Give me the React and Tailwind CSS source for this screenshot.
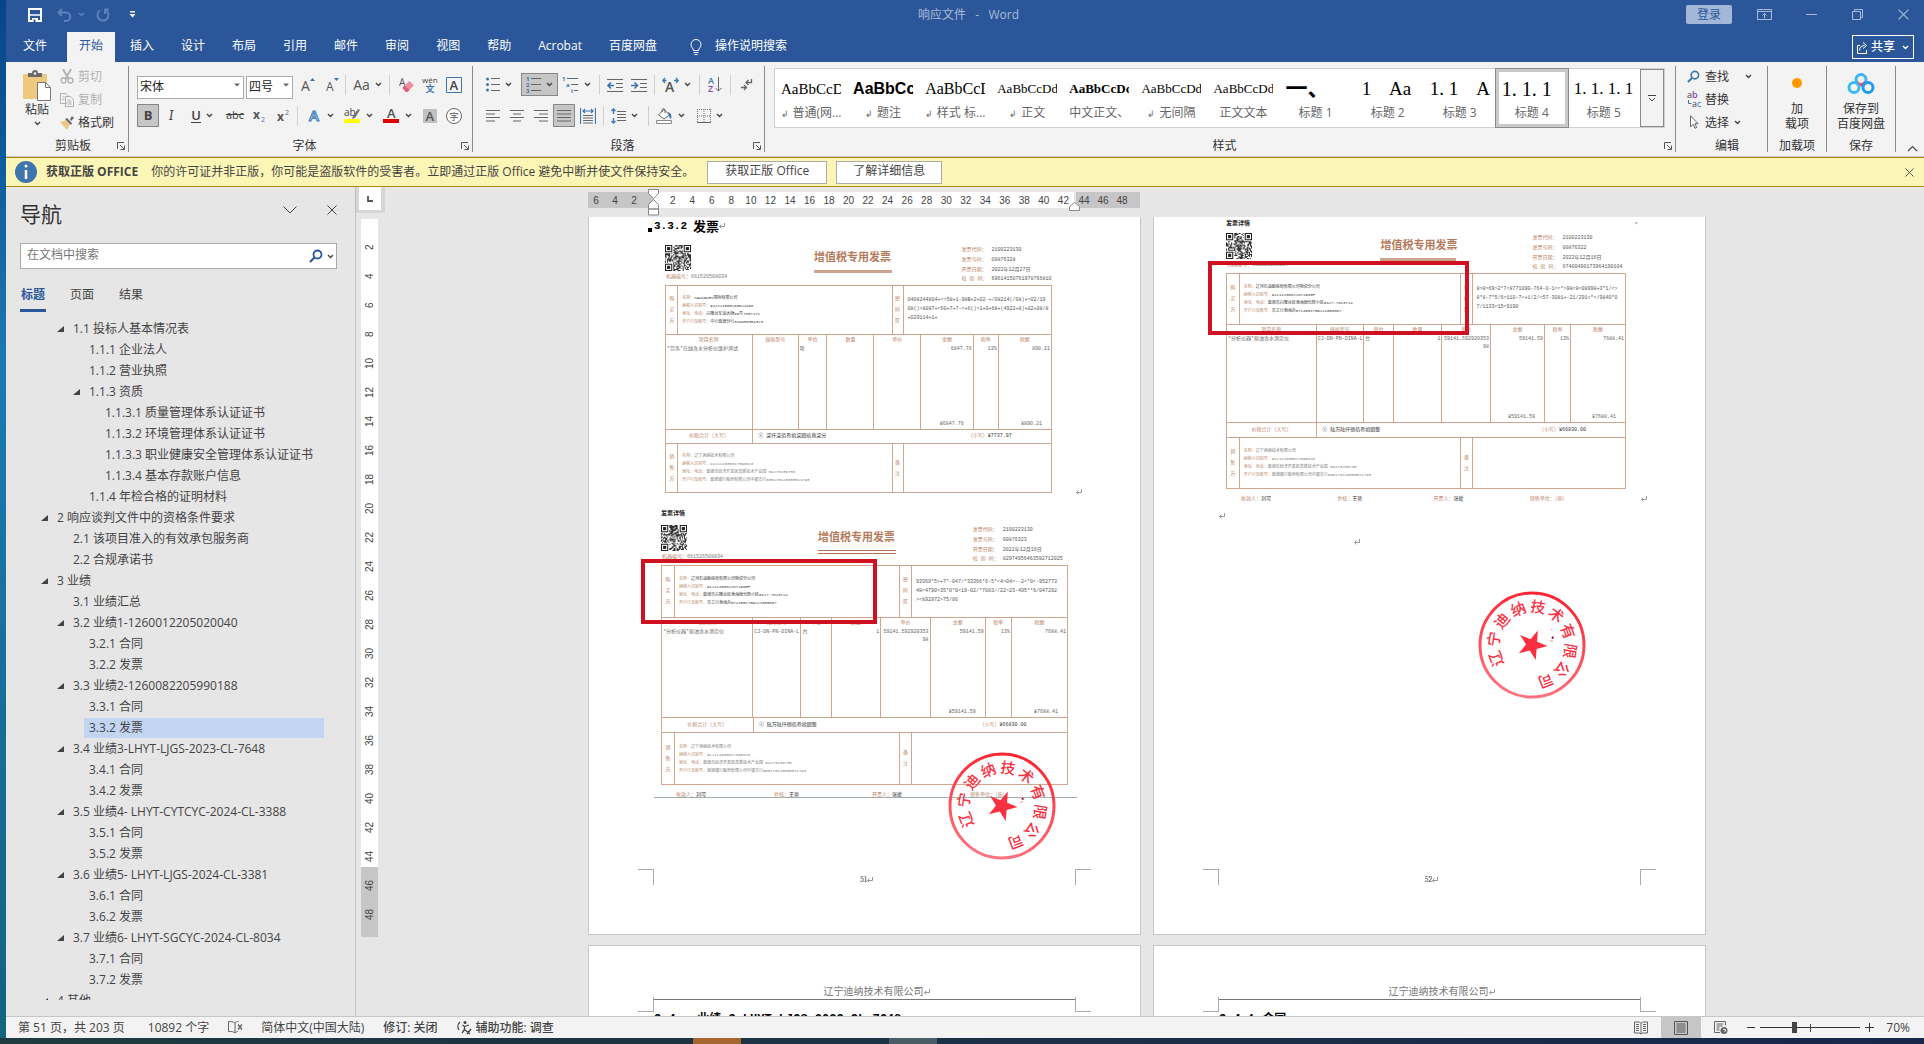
import { useState } from "react";

const tabs = ["插入", "设计", "布局", "引用", "邮件", "审阅", "视图", "帮助", "Acrobat", "百度网盘"];

const headings = [
  { level: 2, text: "1.1 投标人基本情况表", open: true },
  { level: 3, text: "1.1.1 企业法人" },
  { level: 3, text: "1.1.2 营业执照" },
  { level: 3, text: "1.1.3 资质", open: true },
  { level: 4, text: "1.1.3.1 质量管理体系认证证书" },
  { level: 4, text: "1.1.3.2 环境管理体系认证证书" },
  { level: 4, text: "1.1.3.3 职业健康安全管理体系认证证书" },
  { level: 4, text: "1.1.3.4 基本存款账户信息" },
  { level: 3, text: "1.1.4 年检合格的证明材料" },
  { level: 1, text: "2 响应谈判文件中的资格条件要求", open: true },
  { level: 2, text: "2.1 该项目准入的有效承包服务商" },
  { level: 2, text: "2.2 合规承诺书" },
  { level: 1, text: "3 业绩", open: true },
  { level: 2, text: "3.1 业绩汇总" },
  { level: 2, text: "3.2 业绩1-1260012205020040", open: true },
  { level: 3, text: "3.2.1 合同" },
  { level: 3, text: "3.2.2 发票" },
  { level: 2, text: "3.3 业绩2-1260082205990188", open: true },
  { level: 3, text: "3.3.1 合同" },
  { level: 3, text: "3.3.2 发票" },
  { level: 2, text: "3.4 业绩3-LHYT-LJGS-2023-CL-7648", open: true },
  { level: 3, text: "3.4.1 合同" },
  { level: 3, text: "3.4.2 发票" },
  { level: 2, text: "3.5 业绩4- LHYT-CYTCYC-2024-CL-3388", open: true },
  { level: 3, text: "3.5.1 合同" },
  { level: 3, text: "3.5.2 发票" },
  { level: 2, text: "3.6 业绩5- LHYT-LJGS-2024-CL-3381", open: true },
  { level: 3, text: "3.6.1 合同" },
  { level: 3, text: "3.6.2 发票" },
  { level: 2, text: "3.7 业绩6- LHYT-SGCYC-2024-CL-8034", open: true },
  { level: 3, text: "3.7.1 合同" },
  { level: 3, text: "3.7.2 发票" },
  { level: 1, text: "4 其他", open: true },
];

const indents = { 1: "pl-[21px]", 2: "pl-[37px]", 3: "pl-[53px]", 4: "pl-[69px]" };

const song = "font-['Liberation_Serif','Noto_Sans_CJK_SC',serif]";

const styleItems = [
  { sample: "AaBbCcDdE", label: "普通(网...", mark: true, look: `${song} text-[15px]` },
  { sample: "AaBbCcDd", label: "题注", mark: true, look: "font-['Liberation_Sans',sans-serif] text-base font-bold" },
  { sample: "AaBbCcDd", label: "样式 标...", mark: true, look: `${song} text-base` },
  { sample: "AaBbCcDdEe", label: "正文", mark: true, look: `${song} text-[13px]` },
  { sample: "AaBbCcDdEe", label: "中文正文、", look: `${song} text-[13px] font-bold` },
  { sample: "AaBbCcDdEe", label: "无间隔", mark: true, look: `${song} text-[13px]` },
  { sample: "AaBbCcDdEe", label: "正文文本", look: `${song} text-[13px]` },
  { sample: "一、", label: "标题 1", look: `${song} text-[22px] font-bold` },
  { sample: "1    Aa", label: "标题 2", look: `${song} text-[19px] font-medium pl-1` },
  { sample: "1. 1    A", label: "标题 3", look: `${song} text-[19px] font-medium` },
  { sample: "1. 1. 1", label: "标题 4", look: `${song} text-xl font-medium`, active: true },
  { sample: "1. 1. 1. 1", label: "标题 5", look: `${song} text-[17px] font-medium` },
];

/* ---------- small drawings ---------- */

function Svg({ w, h, children, className = "" }) {
  return (
    <svg width={w} height={h} viewBox={`0 0 ${w} ${h}`} fill="none" className={`shrink-0 ${className}`} aria-hidden="true">
      {children}
    </svg>
  );
}

function Chevron({ className = "text-[#444]" }) {
  return (
    <Svg w={7} h={5} className={className}>
      <path d="M1 1l2.5 2.5L6 1" stroke="currentColor" strokeWidth="1.4" />
    </Svg>
  );
}

function Letter({ x, y, size = 12, fill = "#555", children, ...rest }) {
  return (
    <text x={x} y={y} fontSize={size} fill={fill} fontFamily="Open Sans, Noto Sans CJK SC, sans-serif" {...rest}>
      {children}
    </text>
  );
}

function Lines({ rows, color = "#666" }) {
  return rows.map(([x1, x2, y]) => <path key={y} d={`M${x1} ${y}H${x2}`} stroke={color} />);
}

function Launcher() {
  return (
    <Svg w={8} h={8}>
      <path d="M.5 7V.5H7M3 3l4 4M7.5 3.5v4h-4" stroke="#555" />
    </Svg>
  );
}

function Magnifier({ color = "#2b579a", size = 14 }) {
  return (
    <svg width={size} height={size} viewBox="0 0 14 14" fill="none" aria-hidden="true">
      <circle cx="8.5" cy="5.5" r="4" stroke={color} strokeWidth="1.8" />
      <path d="M5.5 8.5L1 13" stroke={color} strokeWidth="2.2" />
    </svg>
  );
}

function CloseMark({ size = 10, color = "#444" }) {
  return (
    <svg width={size} height={size} viewBox="0 0 10 10" fill="none" aria-hidden="true">
      <path d="M.5.5l9 9M9.5.5l-9 9" stroke={color} />
    </svg>
  );
}

/* ---------- title bar and tabs ---------- */

function TitleBar() {
  return (
    <header className="flex h-8 shrink-0 items-center bg-[#2b579a] pr-[15px] pb-[3px] pl-[22px]">
      <div className="flex flex-1 items-center">
        <button aria-label="保存">
          <Svg w={14} h={14}>
            <path d="M1 1h12v12H1z" stroke="#fff" strokeWidth="2" />
            <path d="M1 7h12" stroke="#fff" strokeWidth="1.5" />
            <path d="M4 10h6v4H4z" fill="#fff" />
            <path d="M5.5 11.5h2V14h-2z" fill="#2b579a" />
          </Svg>
        </button>
        <button aria-label="撤消" className="ml-[15px] flex items-center gap-1.5">
          <Svg w={15} h={14}>
            <path d="M5 1L1.500 4.500 5 8M2 4.500h7a4.200 4.200 0 0 1 0 8.500H7" stroke="#5c82bb" strokeWidth="2" />
          </Svg>
          <Chevron className="text-[#5c82bb]" />
        </button>
        <button aria-label="重复" className="ml-[11px]">
          <Svg w={14} h={14}>
            <path d="M4 2.500a5.500 5.500 0 1 0 6 0M13 1.500H9v4.500" stroke="#5c82bb" strokeWidth="2" />
          </Svg>
        </button>
        <button aria-label="自定义快速访问工具栏" className="ml-[19px]">
          <Svg w={7} h={7}>
            <path d="M1 .8h5" stroke="#fff" strokeWidth="1.400" />
            <path d="M.5 3h6l-3 3.500z" fill="#fff" />
          </Svg>
        </button>
      </div>
      <h1 className="text-xs text-[#a9bbd8]">响应文件&nbsp;&nbsp; -&nbsp;&nbsp; Word</h1>
      <div className="flex flex-1 items-center justify-end">
        <button className="mr-[25px] h-[19px] w-[46px] rounded-xs bg-[#a3b8d9] text-xs leading-[18px] text-[#2b579a]">登录</button>
        <button aria-label="功能区显示选项" className="mr-[34px]">
          <Svg w={15} h={11}>
            <path d="M.5.5h14v10H.5zM.5 2.500h14M7.500 9.500V4.500M5.500 6.500l2-2 2 2" stroke="#a9bbd8" />
          </Svg>
        </button>
        <button aria-label="最小化" className="mr-[35px]">
          <Svg w={11} h={11}><path d="M0 5.500h11" stroke="#a9bbd8" /></Svg>
        </button>
        <button aria-label="还原" className="mr-[35px]">
          <Svg w={11} h={11}><path d="M.5 2.500h8v8h-8zM2.500 2.500v-2h8v8h-2" stroke="#a9bbd8" /></Svg>
        </button>
        <button aria-label="关闭"><CloseMark size={11} color="#a9bbd8" /></button>
      </div>
    </header>
  );
}

function TabRow() {
  return (
    <nav className="flex h-[30px] shrink-0 items-stretch bg-[#2b579a] pr-2.5 pl-[5px] text-xs text-white">
      <button className="mr-[8px] px-3 pb-0.5">文件</button>
      <button className="mr-[3px] bg-[#f3f3f3] px-3 pb-0.5 text-[#2b579a]">开始</button>
      {tabs.map((tab) => (
        <button key={tab} className="mr-[3px] px-3 pb-0.5">{tab}</button>
      ))}
      <button className="ml-[18px] flex items-center gap-[13px] pb-0.5">
        <Svg w={12} h={17} className="mt-0.5">
          <path d="M3.500 11.500c0-2-2.500-3-2.500-6a5 5 0 0 1 10 0c0 3-2.500 4-2.500 6zM3.500 13.500h5M4.500 15.500h3" stroke="#fff" />
        </Svg>
        操作说明搜索
      </button>
      <button className="mt-[3px] mb-[3px] ml-auto flex items-center gap-[3px] border border-white px-1 font-medium">
        <Svg w={11} h={13}>
          <path d="M3 4.500H.5v8h9V9M2.500 9.500c0-3 2-5 5-5M6 1.500l3.500 3L6 7.500" stroke="#fff" />
        </Svg>
        共享
        <Chevron className="ml-1 text-white" />
      </button>
    </nav>
  );
}

/* ---------- ribbon ---------- */

function Tool({ label, className = "w-6", active, drop, children }) {
  return (
    <button
      aria-label={label}
      className={`flex h-[23px] shrink-0 items-center justify-center ${active ? "border border-[#888] bg-[#c6c6c6]" : ""} ${className}`}
    >
      {children}
      {drop && <span className="ml-[5px]"><Chevron /></span>}
    </button>
  );
}

function Divider() {
  return <span className="h-5 w-px shrink-0 bg-[#d0d0d0]" />;
}

function Group({ name, launcher, className = "", children }) {
  return (
    <section className={`my-1 flex shrink-0 flex-col border-r border-[#8a8a8a] ${className}`}>
      <div className="flex-1">{children}</div>
      <div className="relative h-[17px] text-center text-xs leading-[21px] text-[#333]">
        {name}
        {launcher && (
          <button aria-label={`${name}设置`} className="absolute right-[3px] bottom-[2px]"><Launcher /></button>
        )}
      </div>
    </section>
  );
}

function Combo({ label, value, options, className }) {
  return (
    <label className={`relative block h-[23px] ${className}`}>
      <span className="sr-only">{label}</span>
      <select defaultValue={value} className="h-full w-full appearance-none border border-[#ababab] bg-white pl-[2px] text-xs leading-5 text-[#222]">
        {options.map((option) => <option key={option}>{option}</option>)}
      </select>
      <Svg w={6} h={4} className="pointer-events-none absolute top-[10px] right-1"><path d="M0 .5h6l-3 3z" fill="#666" /></Svg>
    </label>
  );
}

function ClipboardGroup() {
  return (
    <Group name="剪贴板" launcher className="w-[123px] pl-3">
      <div className="flex">
        <button className="flex w-[38px] flex-col items-center pt-1 text-xs leading-[17px] text-[#333]">
          <Svg w={30} h={31}>
            <path d="M1 4h24v25H1z" fill="#edc87e" />
            <path d="M6 3h4a3 3 0 0 1 6 0h4v4H6z" fill="#6a6a6a" />
            <circle cx="13" cy="3.500" r="1.300" fill="#f3f3f3" />
            <path d="M15.500 12.500h8l5 5v13h-13z" fill="#fff" stroke="#777" />
            <path d="M23.500 12.500v5h5" stroke="#777" />
          </Svg>
          粘贴
          <span className="mt-[3px]"><Chevron /></span>
        </button>
        <div className="-mt-px ml-1 flex flex-col text-xs leading-[23px]">
          <button className="flex h-[23px] items-center gap-1 text-[#b1b1b1]">
            <Svg w={14} h={15}>
              <path d="M3 0l5.500 10M11 0L5.500 10" stroke="#b1b1b1" strokeWidth="2" />
              <circle cx="3.500" cy="11.500" r="2.500" stroke="#b1b1b1" strokeWidth="1.300" />
              <circle cx="10.500" cy="11.500" r="2.500" stroke="#b1b1b1" strokeWidth="1.300" />
            </Svg>
            剪切
          </button>
          <button className="flex h-[23px] items-center gap-1 text-[#b1b1b1]">
            <Svg w={14} h={14}>
              <path d="M7 10.500H.5V.5H6L8.500 3M2.500 4h2M2.500 6.500h2" stroke="#b1b1b1" />
              <path d="M5.500 3.500h5l3 3v7h-8zM7.500 7h3M7.500 9h4M7.500 11h4" stroke="#b1b1b1" />
            </Svg>
            复制
          </button>
          <button className="flex h-[23px] items-center gap-1 text-[#333]">
            <Svg w={14} h={14}>
              <path d="M0 6l6-2 4 4-3 6z" fill="#edc48a" />
              <path d="M5 3l2-1 5 5-1 2zM10 3l2-3 2 2-3 3z" fill="#6a6a6a" />
            </Svg>
            格式刷
          </button>
        </div>
      </div>
    </Group>
  );
}

function FontGroup() {
  return (
    <Group name="字体" launcher className="w-[344px] pl-2">
      <div className="flex items-center pt-[7px]">
        <Combo label="字体" value="宋体" options={["宋体", "黑体"]} className="mr-[2px] w-[107px]" />
        <Combo label="字号" value="四号" options={["四号", "小四"]} className="mr-[2px] w-[47px]" />
        <Tool label="增大字号" className="w-[25px]">
          <Svg w={14} h={15}><Letter x={0} y={14} size={14}>A</Letter><path d="M9 4h5l-2.500-3z" fill="#3e75ad" /></Svg>
        </Tool>
        <Tool label="减小字号" className="w-[25px]">
          <Svg w={13} h={15}><Letter x={0} y={14} size={12}>A</Letter><path d="M8 1h5l-2.500 3z" fill="#3e75ad" /></Svg>
        </Tool>
        <Divider />
        <Tool label="更改大小写" drop className="w-[43px] text-sm text-[#555]">Aa</Tool>
        <Divider />
        <Tool label="清除所有格式" className="ml-1 w-6">
          <Svg w={15} h={16}>
            <Letter x={0} y={9} size={10}>A</Letter>
            <path d="M3.500 11L10 4l5 4-6.500 7H7z" fill="#ec8ea0" />
            <path d="M3.500 11l2-2.200L10.500 13l-2 2H7z" fill="#d9607c" />
          </Svg>
        </Tool>
        <Tool label="拼音指南" className="w-6">
          <Svg w={16} h={17}>
            <Letter x={0} y={7} size={8} fill="#444">wén</Letter>
            <Letter x={3.500} y={16} size={9} fill="#3e75ad" fontWeight="bold">文</Letter>
          </Svg>
        </Tool>
        <Tool label="字符边框" className="w-6">
          <Svg w={16} h={16}><path d="M.5.5h15v15H.5z" stroke="#3e75ad" /><Letter x={3.500} y={13} size={13} fill="#444" fontWeight="600">A</Letter></Svg>
        </Tool>
      </div>
      <div className="flex items-center pt-2 text-[13px] text-[#444]">
        <Tool label="加粗" active className="w-[22px] font-bold">B</Tool>
        <Tool label="倾斜" className="ml-px w-[22px] font-serif text-sm italic">I</Tool>
        <Tool label="下划线" drop className="ml-[3px] w-[34px] font-semibold"><span className="border-b border-[#444] leading-[14px]">U</span></Tool>
        <Tool label="删除线" className="ml-[4px] w-6 text-[11px] line-through">abc</Tool>
        <Tool label="下标" className="ml-[2px] w-[22px]">
          <Svg w={14} h={13}><Letter x={0} y={10} size={12} fontWeight="bold">x</Letter><Letter x={8} y={13} size={7} fill="#3e75ad">2</Letter></Svg>
        </Tool>
        <Tool label="上标" className="mr-[2px] ml-[2px] w-[22px]">
          <Svg w={14} h={13}><Letter x={0} y={12} size={12} fontWeight="bold">x</Letter><Letter x={8} y={6} size={7} fill="#3e75ad">2</Letter></Svg>
        </Tool>
        <Divider />
        <Tool label="文本效果" drop className="ml-[5px] w-[34px]">
          <Svg w={15} h={15}><Letter x={2} y={13} size={15} fill="#fff" stroke="#4a86c4" strokeWidth="1.200" fontWeight="600">A</Letter></Svg>
        </Tool>
        <Tool label="突出显示" drop className="ml-[4px] w-[34px]">
          <Svg w={17} h={17}>
            <Letter x={0} y={9} size={10} fill="#444">ab</Letter>
            <path d="M14 2l2 1-5 8-3 1 1-3z" fill="#777" />
            <path d="M0 12h16v4H0z" fill="#ff0" />
          </Svg>
        </Tool>
        <Tool label="字体颜色" drop className="ml-[5px] w-[34px]">
          <Svg w={17} h={17}><Letter x={4} y={11} size={13} fontWeight="600">A</Letter><path d="M0 12h16v4H0z" fill="#e00000" /></Svg>
        </Tool>
        <Tool label="字符底纹" className="ml-[4px] w-6">
          <Svg w={14} h={14}><path d="M0 0h14v14H0z" fill="#c0c0c0" /><Letter x={2.500} y={12} size={13} fontWeight="600">A</Letter></Svg>
        </Tool>
        <Tool label="带圈字符" className="w-6">
          <Svg w={16} h={16}><circle cx="8" cy="8" r="7.500" stroke="#666" fill="#fff" /><Letter x={3.500} y={11.500} size={9}>字</Letter></Svg>
        </Tool>
      </div>
    </Group>
  );
}

function ParagraphGroup() {
  return (
    <Group name="段落" launcher className="w-[292px] pl-2">
      <div className="flex items-center pt-[7px]">
        <Tool label="项目符号" drop className="w-9">
          <Svg w={14} h={15}>
            <circle cx="1.500" cy="2" r="1.500" fill="#3e75ad" /><circle cx="1.500" cy="7.500" r="1.500" fill="#3e75ad" /><circle cx="1.500" cy="13" r="1.500" fill="#3e75ad" />
            <Lines rows={[[5, 14, 1.5], [5, 14, 7.5], [5, 14, 13.5]]} />
          </Svg>
        </Tool>
        <Tool label="编号" drop active className="ml-1 w-[37px]">
          <Svg w={15} h={17}>
            <Letter x={0} y={5} size={6} fill="#3e75ad" fontWeight="bold">1</Letter>
            <Letter x={0} y={11} size={6} fill="#3e75ad" fontWeight="bold">2</Letter>
            <Letter x={0} y={17} size={6} fill="#3e75ad" fontWeight="bold">3</Letter>
            <Lines rows={[[5, 15, 2.5], [5, 15, 8.5], [5, 15, 14.5]]} />
          </Svg>
        </Tool>
        <Tool label="多级列表" drop className="mr-[7px] ml-[2px] w-8">
          <Svg w={17} h={17}>
            <Letter x={0} y={5} size={6} fill="#3e75ad" fontWeight="bold">1</Letter>
            <Letter x={4} y={11} size={6} fill="#3e75ad" fontWeight="bold">a</Letter>
            <Letter x={9} y={17} size={6} fill="#3e75ad" fontWeight="bold">i</Letter>
            <Lines rows={[[5, 16, 2.5], [9, 16, 8.5], [12, 16, 14.5]]} />
          </Svg>
        </Tool>
        <Divider />
        <Tool label="减少缩进量" className="ml-[3px] w-6">
          <Svg w={16} h={14}>
            <Lines rows={[[0, 16, 1.5], [9, 16, 5.5], [9, 16, 9.5], [0, 16, 13.5]]} />
            <path d="M7 7.500H1M4 4.500l-3 3 3 3" stroke="#3e75ad" strokeWidth="1.600" />
          </Svg>
        </Tool>
        <Tool label="增加缩进量" className="mr-[3px] w-6">
          <Svg w={16} h={14}>
            <Lines rows={[[0, 16, 1.5], [9, 16, 5.5], [9, 16, 9.5], [0, 16, 13.5]]} />
            <path d="M0 7.500h6M3.500 4.500l3 3-3 3" stroke="#3e75ad" strokeWidth="1.600" />
          </Svg>
        </Tool>
        <Divider />
        <Tool label="中文版式" drop className="mr-[6px] ml-[4px] w-[34px]">
          <Svg w={17} h={15}>
            <Letter x={3} y={15} size={14} fontWeight="600">A</Letter>
            <path d="M4.500 3.500H1M3 1L.8 3.500 3 6M12 3.500h4M14 1l2.200 2.500L14 6" stroke="#3e75ad" strokeWidth="1.300" />
          </Svg>
        </Tool>
        <Divider />
        <Tool label="排序" className="mr-[3px] ml-[3px] w-6">
          <Svg w={14} h={17}>
            <Letter x={0} y={8} size={9} fill="#3e75ad" fontWeight="600">A</Letter>
            <Letter x={0} y={16} size={9} fill="#8e44ad" fontWeight="600">Z</Letter>
            <path d="M10.500 1v14M7.500 12l3 3 3-3" stroke="#666" />
          </Svg>
        </Tool>
        <Divider />
        <Tool label="显示编辑标记" className="ml-1 w-6">
          <Svg w={12} h={13}>
            <path d="M10.500 1v3.500h-5M7.500 2L5 4.500 7.500 7M0 9.500h5M3 7l2.500 2.500L3 12" stroke="#666" strokeWidth="1.300" />
          </Svg>
        </Tool>
      </div>
      <div className="flex items-center pt-2">
        <Tool label="左对齐"><Svg w={14} h={12}><Lines rows={[[0, 14, 0.5], [0, 9, 4], [0, 14, 7.5], [0, 9, 11]]} /></Svg></Tool>
        <Tool label="居中"><Svg w={14} h={12}><Lines rows={[[0, 14, 0.5], [3, 11, 4], [0, 14, 7.5], [3, 11, 11]]} /></Svg></Tool>
        <Tool label="右对齐"><Svg w={14} h={12}><Lines rows={[[0, 14, 0.5], [5, 14, 4], [0, 14, 7.5], [5, 14, 11]]} /></Svg></Tool>
        <Tool label="两端对齐" active className="w-[22px]"><Svg w={14} h={12}><Lines rows={[[0, 14, 0.5], [0, 14, 4], [0, 14, 7.5], [0, 14, 11]]} /></Svg></Tool>
        <Tool label="分散对齐" className="mr-[3px] ml-px w-6">
          <Svg w={16} h={16}>
            <path d="M.5 0v16M15.500 0v16M3 3h10M5 1L3 3l2 2M11 1l2 2-2 2" stroke="#3e75ad" strokeWidth="1.200" />
            <Lines rows={[[3, 13, 7.5], [3, 13, 10], [3, 13, 12.5], [3, 13, 15]]} />
          </Svg>
        </Tool>
        <Divider />
        <Tool label="行距" drop className="mr-[7px] ml-[3px] w-[34px]">
          <Svg w={15} h={16}>
            <Lines rows={[[6, 15, 3.5], [6, 15, 6.5], [6, 15, 9.5], [6, 15, 12.5]]} />
            <path d="M2.500 1v5M.5 3l2-2 2 2M2.500 10v5M.5 13l2 2 2-2" stroke="#3e75ad" strokeWidth="1.300" />
          </Svg>
        </Tool>
        <Divider />
        <Tool label="底纹" drop className="ml-[4px] w-[34px]">
          <Svg w={17} h={16}>
            <path d="M2.500 7L8 1.500l5.500 5.500L8 11z" fill="#fff" stroke="#666" />
            <path d="M6 4V1.500a2 2 0 0 1 3 0V5" stroke="#666" />
            <path d="M12 4c3 1 4 4 3 7-2-1-2-4-3-7z" fill="#3e75ad" />
            <path d="M.5 12.500h15v3H.5z" fill="#fff" stroke="#888" />
          </Svg>
        </Tool>
        <Tool label="边框" drop className="ml-[4px] w-[38px]">
          <Svg w={14} h={14}>
            <path d="M.5 0v14M7 0v14M13.500 0v14M0 .5h14M0 7h14" stroke="#777" strokeDasharray="1 1" />
            <path d="M0 13.500h14" stroke="#666" />
          </Svg>
        </Tool>
      </div>
    </Group>
  );
}

function StylesGroup() {
  return (
    <Group name="样式" launcher className="min-w-0 flex-1 pl-[9px]">
      <div className="mt-[2px] mr-[10px] flex h-[60px] justify-between border border-[#d0d0d0] bg-white">
        {styleItems.map((item) => (
          <button
            key={item.label}
            className={`flex w-[72px] flex-col items-center ${item.active ? "border-[3px] border-[#c9c9c9] outline outline-[#8a8a8a]" : "border-[3px] border-transparent"}`}
          >
            <span className={`mt-[3px] block h-7 w-[60px] overflow-hidden text-left leading-7 whitespace-pre text-black ${item.look}`}>
              {item.sample}
            </span>
            <span className="mt-px text-xs leading-[18px] whitespace-nowrap text-[#666]">
              {item.mark && <span className="mr-1 text-[9px]">↲</span>}
              {item.label}
            </span>
          </button>
        ))}
        <button aria-label="其他样式" className="flex w-6 items-center justify-center border border-[#8a8a8a] bg-[#f3f3f3]">
          <Svg w={8} h={7}><path d="M0 .5h8M1 3l3 3 3-3" stroke="#444" /></Svg>
        </button>
      </div>
    </Group>
  );
}

function EditGroups() {
  return (
    <>
      <Group name="编辑" className="w-[92px] pl-[11px]">
        <div className="-mt-px flex flex-col text-xs text-[#333]">
          <button className="flex h-[23px] items-center gap-[5px]"><Magnifier color="#3e75ad" size={13} />查找<span className="ml-[11px]"><Chevron /></span></button>
          <button className="flex h-[23px] items-center gap-[2px]">
            <Svg w={16} h={17}>
              <Letter x={0} y={7} size={9} fill="#444">a</Letter>
              <Letter x={5} y={7} size={9} fill="#8e44ad" fontWeight="600">b</Letter>
              <Letter x={5} y={16} size={9} fill="#444">a</Letter>
              <Letter x={10} y={16} size={9} fill="#3e75ad">c</Letter>
              <path d="M1.500 9v3.500h3" stroke="#3e75ad" />
            </Svg>
            替换
          </button>
          <button className="flex h-[23px] items-center gap-[5px]">
            <Svg w={13} h={15}><path d="M3.500.8v11l2.700-2.500 1.800 4 1.700-.8-1.800-3.800h3.300z" stroke="#666" fill="#fff" /></Svg>
            选择
            <Chevron />
          </button>
        </div>
      </Group>
      <Group name="加载项" className="w-[59px]">
        <button className="flex w-full flex-col items-center pt-[11px] text-xs leading-[15px] text-[#333]">
          <Svg w={12} h={12} className="mb-3"><circle cx="6" cy="6" r="5" fill="#ff9800" /></Svg>
          加
          <span>载项</span>
        </button>
      </Group>
      <Group name="保存" className="w-[69px]">
        <button className="flex w-full flex-col items-center pt-[7px] text-xs leading-[15px] text-[#333]">
          <Svg w={28} h={21} className="mb-[7px]">
            <circle cx="14" cy="6.500" r="5" stroke="#3fb4f5" strokeWidth="3" />
            <path d="M9.500 9a5 5 0 0 0 9 0" stroke="#f2496b" strokeWidth="3.500" />
            <circle cx="7" cy="14.500" r="5" stroke="#35bdf2" strokeWidth="3" />
            <circle cx="21" cy="14.500" r="5" stroke="#1e9bf0" strokeWidth="3" />
          </Svg>
          保存到
          <span>百度网盘</span>
        </button>
      </Group>
    </>
  );
}

function Ribbon() {
  return (
    <div className="flex h-[95px] shrink-0 border-b border-[#c8c8c8] bg-[#f3f3f3]">
      <ClipboardGroup />
      <FontGroup />
      <ParagraphGroup />
      <StylesGroup />
      <EditGroups />
      <button aria-label="折叠功能区" className="flex w-[28px] items-end justify-end pr-1.5 pb-1">
        <Svg w={11} h={7}><path d="M1 6l4.500-4.500L10 6" stroke="#444" strokeWidth="1.200" /></Svg>
      </button>
    </div>
  );
}

function LicenseBar() {
  return (
    <div className="flex h-[30px] shrink-0 items-center border-y border-[#b08a00] bg-[#fcf6b6] pr-[10px] pl-[9px] text-xs text-[#444]">
      <Svg w={22} h={22}>
        <circle cx="11" cy="11" r="11" fill="#3e75ad" />
        <path d="M11 9v9" stroke="#fff" strokeWidth="2.500" />
        <circle cx="11" cy="5" r="1.500" fill="#fff" />
      </Svg>
      <strong className="ml-[9px] font-bold">获取正版 OFFICE</strong>
      <span className="ml-[13px]">你的许可证并非正版，你可能是盗版软件的受害者。立即通过正版 Office 避免中断并使文件保持安全。</span>
      <button className="ml-[13px] h-[23px] w-[120px] border border-[#ababab] bg-white pb-0.5">获取正版 Office</button>
      <button className="ml-[9px] h-[23px] w-[106px] border border-[#ababab] bg-white pb-0.5">了解详细信息</button>
      <button aria-label="关闭消息" className="ml-auto"><CloseMark size={9} /></button>
    </div>
  );
}

/* ---------- navigation pane ---------- */

function NavigationPane() {
  const [selected, setSelected] = useState("3.3.2 发票");
  return (
    <aside className="flex w-[350px] shrink-0 flex-col border-r border-[#c0c0c0] pb-4 pl-[14px]">
      <div className="flex h-[54px] shrink-0 items-center pr-[18px]">
        <h2 className="flex-1 text-[21px] leading-[50px] text-[#333]">导航</h2>
        <button aria-label="任务窗格选项" className="mr-[30px] mb-2">
          <Svg w={14} h={8}><path d="M.5.5L7 7 13.500.5" stroke="#444" /></Svg>
        </button>
        <button aria-label="关闭导航" className="mb-2"><CloseMark size={10} /></button>
      </div>
      <div className="mt-[2px] mr-[18px] flex h-[26px] shrink-0 items-center border border-[#ababab] bg-white pr-[2px]">
        <input type="text" aria-label="在文档中搜索" placeholder="在文档中搜索" className="min-w-0 flex-1 pb-0.5 pl-1.5 text-xs outline-none placeholder:text-[#777]" />
        <button aria-label="搜索" className="flex items-center gap-1"><Magnifier /><Chevron /></button>
      </div>
      <div className="mt-4 flex h-[27px] shrink-0 gap-6 text-xs leading-5 text-[#444]">
        <button className="flex flex-col border-b-3 border-[#2b579a] px-px font-bold text-[#2b579a]">标题</button>
        <button className="flex flex-col pr-px">页面</button>
        <button className="flex flex-col">结果</button>
      </div>
      <ul className="mt-[6px] min-h-0 flex-1 overflow-hidden text-xs text-[#444]">
        {headings.map((item) => (
          <li key={item.text} className={`flex h-[21px] items-center ${indents[item.level]}`}>
            {item.open ? (
              <button aria-label="折叠" className="w-[11px] shrink-0">
                <Svg w={7} h={6}><path d="M7 0v6H0z" fill="#444" /></Svg>
              </button>
            ) : (
              <span className="w-[11px] shrink-0" />
            )}
            <button
              onClick={() => setSelected(item.text)}
              className={`h-5 pl-[5px] text-left leading-[19px] whitespace-nowrap ${selected === item.text ? "w-[240px] bg-[#c2d5f2]" : ""}`}
            >
              {item.text}
            </button>
          </li>
        ))}
      </ul>
    </aside>
  );
}

/* ---------- rulers ---------- */

const evens = (from, to) => Array.from({ length: (to - from) / 2 + 1 }, (_, i) => from + i * 2);

function VerticalRuler() {
  return (
    <div className="flex w-[29px] shrink-0 flex-col font-['Liberation_Sans',sans-serif] text-[10px] text-[#444]">
      <div className="h-[26px] border-r-4 border-b-3 border-l-3 border-[#d6d6d6]">
        <button aria-label="制表符" className="flex h-full w-full items-center justify-center bg-white">
          <Svg w={6} h={6}><path d="M1 0v5h5" stroke="#555" strokeWidth="1.800" /></Svg>
        </button>
      </div>
      <div className="mt-1.5 ml-[5px] w-[17px]">
        <div className="h-[648px] bg-white pt-[14px]">
          {evens(2, 44).map((n) => (
            <span key={n} className="flex h-[29px] w-full rotate-180 items-center justify-center [writing-mode:vertical-rl]">{n}</span>
          ))}
        </div>
        <div className="bg-[#c6c6c6] pt-1 pb-2">
          {[46, 48].map((n) => (
            <span key={n} className="flex h-[29px] w-full rotate-180 items-center justify-center [writing-mode:vertical-rl]">{n}</span>
          ))}
        </div>
      </div>
    </div>
  );
}

function HorizontalRuler() {
  return (
    <div className="relative flex h-4 w-[552px] font-['Liberation_Sans',sans-serif] text-[10px] leading-[17px] text-[#444]">
      <div className="flex w-[66px] justify-end gap-[3px] bg-[#c6c6c6] pr-3 text-center">
        {[6, 4, 2].map((n) => <span key={n} className="w-4">{n}</span>)}
      </div>
      <div className="flex w-[420px] bg-white pr-px pl-[9px] text-center">
        {evens(2, 42).map((n) => <span key={n} className="flex-1">{n}</span>)}
      </div>
      <div className="ml-[2px] flex flex-1 gap-[3px] bg-[#c6c6c6] text-center">
        {[44, 46, 48].map((n) => <span key={n} className="w-4">{n}</span>)}
      </div>
      <Svg w={11} h={27} className="absolute -top-[3px] left-[60px]">
        <path d="M.5.5h10v4l-5 5-5-5zM.5 20v-4.500l5-5 5 5V20zM.5 20h10v6H.5z" fill="#fff" stroke="#888" />
      </Svg>
      <Svg w={11} h={9} className="absolute top-2.5 left-[481px]"><path d="M.5 8.500v-4l5-4 5 4v4z" fill="#fff" stroke="#888" /></Svg>
    </div>
  );
}

/* ---------- scanned invoices ---------- */

function QrCode({ seed }) {
  const cells = [];
  let state = seed;
  for (let y = 0; y < 25; y++) {
    for (let x = 0; x < 25; x++) {
      state = (state * 1103515245 + 12345) % 2147483648;
      const finder = (x < 8 && y < 8) || (x > 16 && y < 8) || (x < 8 && y > 16);
      if (!finder && state / 2147483648 > 0.45) cells.push(`M${x} ${y}h1v1h-1z`);
    }
  }
  return (
    <svg viewBox="0 0 25 25" className="h-[26px] w-[26px]" role="img" aria-label="二维码">
      <path d={cells.join("")} fill="#333" />
      {[[0, 0], [18, 0], [0, 18]].map(([x, y]) => (
        <g key={`${x}-${y}`}>
          <rect x={x + 0.5} y={y + 0.5} width="6" height="6" fill="none" stroke="#222" />
          <rect x={x + 2} y={y + 2} width="3" height="3" fill="#222" />
        </g>
      ))}
    </svg>
  );
}

function Party({ lines, dark }) {
  return (
    <div className={`flex flex-col justify-center pl-1 text-[4px] leading-[8px] whitespace-nowrap ${dark ? "text-[#333]" : "text-[#777]"}`}>
      {lines.map(([name, value]) => (
        <p key={name}><span className="text-[#b98468]">{name}</span>{value}</p>
      ))}
    </div>
  );
}

function SideLabel({ text }) {
  return (
    <div className="flex flex-col items-center justify-center gap-[5px] border-r border-[#d2a58f] text-[5px] leading-[6px] text-[#b98468]">
      {[...text].map((c) => <span key={c}>{c}</span>)}
    </div>
  );
}

const columns = [
  ["项目名称", "w-[22.4%]"],
  ["规格型号", "w-[11.9%]"],
  ["单位", "w-[7.5%]"],
  ["数量", "w-[12.2%]"],
  ["单价", "w-[12.2%]"],
  ["金额", "w-[13.6%]"],
  ["税率", "w-[6.5%]"],
  ["税额", "w-[13.7%]"],
];

function Invoice({ data, className, bodyHeight, bar }) {
  return (
    <article className={`flex flex-col font-['Liberation_Mono','Noto_Sans_CJK_SC',monospace] text-[5px] ${className}`}>
      <div className="grid grid-cols-[38.6fr_20fr_18fr_23.4fr] whitespace-nowrap">
        <div className="h-10">
          <QrCode seed={data.seed} />
          <p className="pl-px leading-[12px] text-[#b98468]">机器编号：<span className="text-[#777]">661526508034</span></p>
        </div>
        <div className="pt-[7px]">
          <p className="text-[11px] leading-[13px] font-bold text-[#b57a5c]">增值税专用发票</p>
          <div className={`mt-[5px] ${bar}`} />
        </div>
        <dl className="col-start-4 grid grid-cols-[30px_auto] pt-px leading-[9px] text-[#555]">
          <dt className="text-[#b98468]">发票代码：</dt><dd>{data.code}</dd>
          <dt className="text-[#b98468]">发票号码：</dt><dd>{data.number}</dd>
          <dt className="text-[#b98468]">开票日期：</dt><dd>{data.date}</dd>
          <dt className="text-[#b98468]">校 验 码：</dt><dd>{data.check}</dd>
        </dl>
      </div>
      <div className={`flex flex-col border border-[#d2a58f] ${bodyHeight}`}>
        <div className="grid flex-49 grid-cols-[3.2fr_55.4fr_3.1fr_38.3fr]">
          <SideLabel text="购买方" />
          <Party dark lines={data.buyer} />
          <div className="flex flex-col border-l border-[#d2a58f]"><div className="grid flex-1"><SideLabel text="密码区" /></div></div>
          <div className="flex flex-col justify-center pl-1 leading-[9px] whitespace-nowrap text-[#555]">
            {data.cipher.map((line) => <p key={line}>{line}</p>)}
          </div>
        </div>
        <div className="flex-96 border-y border-[#d2a58f]">
          <table className="h-full w-full table-fixed leading-[8px] text-[#666]">
            <thead>
              <tr className="h-2.5 text-[#b98468]">
                {columns.map(([name, width]) => (
                  <th key={name} className={`border-r border-[#d2a58f] p-0 font-normal last:border-r-0 ${width}`}>{name}</th>
                ))}
              </tr>
            </thead>
            <tbody>
              <tr>
                {data.row.map((cell, i) => (
                  <td key={i} className={`border-r border-[#d2a58f] px-px align-top last:border-r-0 ${i < 3 ? "whitespace-nowrap" : "text-right break-all"}`}>{cell}</td>
                ))}
              </tr>
              <tr className="h-2.5">
                {columns.map(([name]) => (
                  <td key={name} className="border-r border-[#d2a58f] p-0 pr-[9px] text-right last:border-r-0">
                    {name === "金额" && data.amount}
                    {name === "税额" && data.tax}
                  </td>
                ))}
              </tr>
            </tbody>
          </table>
        </div>
        <div className="grid flex-14 grid-cols-[22.4fr_56fr_21.6fr] items-center leading-[8px]">
          <p className="text-center text-[#b98468]">价税合计（大写）</p>
          <p className="flex h-full items-center border-l border-[#d2a58f] pl-[5px] text-[#333]">ⓧ {data.words}</p>
          <p className="text-[#333]"><span className="text-[#b98468]">（小写）</span>{data.total}</p>
        </div>
        <div className="grid flex-49 grid-cols-[3.2fr_55.4fr_3.1fr_38.3fr] border-t border-[#d2a58f]">
          <SideLabel text="销售方" />
          <Party
            lines={[
              ["名称：", "辽宁迪纳技术有限公司"],
              ["纳税人识别号：", "912111030817396828"],
              ["地址、电话：", "盘锦市经济开发区高新技术产业园 04273236736"],
              ["开户行及账号：", "盘锦银行股份有限公司中银支行660170120800011793"],
            ]}
          />
          <div className="flex flex-col border-l border-[#d2a58f]"><div className="grid flex-1"><SideLabel text="备注" /></div></div>
        </div>
      </div>
      {data.footer && (
        <div className="mt-[5px] grid grid-cols-4 pl-[15px] leading-[10px] text-[#333]">
          <p><span className="text-[#b98468]">收款人：</span>刘可</p>
          <p><span className="text-[#b98468]">复核：</span>王艳</p>
          <p><span className="text-[#b98468]">开票人：</span>张媛</p>
          <p className="text-[#b98468]">销售单位：（章）</p>
        </div>
      )}
    </article>
  );
}

const branchBuyer = [
  ["名称：", "辽河石油勘探局有限公司物资分公司"],
  ["纳税人识别号：", "91211100822872980F"],
  ["地址、电话：", "盘锦市兴隆台区渤海街光辉小区0427-7813724"],
  ["开户行及账号：", "市工行渤海办0714001709221000867"],
];

const branchRow = ["*分析仪器*原油含水测定仪", "CJ-DN-PN-DINA-L", "台", "1", "59141.59292035398", "59141.59", "13%", "7688.41"];

const invoices = [
  {
    seed: 71,
    code: "2100223130",
    number: "00876328",
    date: "2022年12月27日",
    check: "69614150761978766810",
    buyer: [
      ["名称：", "SACKBURY国际有限公司"],
      ["纳税人识别号：", "912111000260024488"],
      ["地址、电话：", "兴隆台军油大街60号7807171"],
      ["开户行及账号：", "中行盘锦分行316856354373"],
    ],
    cipher: ["0408244804+<>58+1-98B+2+02-+/08214(/08)+>02/19", "08()>8087+<60+7+7-<+6()>1+0+68+(4922+8)+82+08/8", "+029114+1+"],
    row: ["*劳务*在线含水分析仪维护测试", "", "项", "", "", "6847.76", "13%", "890.21"],
    amount: "¥6847.76",
    tax: "¥890.21",
    words: "柒仟柒佰叁拾柒圆玖角柒分",
    total: "¥7737.97",
  },
  {
    seed: 1234,
    code: "2100223130",
    number: "00876323",
    date: "2022年12月16日",
    check: "82974956463592712025",
    buyer: branchBuyer,
    cipher: ["93369*5>+7*-047/*33366*6-5*<4>04>--2<*0<-952773", "48<4790>35*0*0<19-02/*7083//22>23-495**6/047292", "><892972>75/06"],
    row: branchRow,
    amount: "¥59141.59",
    tax: "¥7688.41",
    words: "陆万陆仟捌佰叁拾圆整",
    total: "¥66830.00",
    footer: true,
  },
  {
    seed: 998,
    code: "2100223130",
    number: "00876322",
    date: "2022年12月16日",
    check: "67400490173964190104",
    buyer: branchBuyer,
    cipher: ["8>8>69>2*7<8771090-764-0-1<<*>98<8<08998+3*1/<>", "8*8-7*5/6>110-7<+1/2/<57-3081+-21/291<*</9840*0", "7/1133<15<9190"],
    row: branchRow,
    amount: "¥59141.59",
    tax: "¥7688.41",
    words: "陆万陆仟捌佰叁拾圆整",
    total: "¥66830.00",
    footer: true,
  },
];

function Stamp({ className }) {
  const star = Array.from({ length: 10 }, (_, i) => {
    const r = i % 2 ? 6 : 15.5;
    const a = ((22 + i * 36) * Math.PI) / 180;
    return `${(54 + r * Math.sin(a)).toFixed(1)},${(54 - r * Math.cos(a)).toFixed(1)}`;
  }).join(" ");
  return (
    <svg width="108" height="108" viewBox="0 0 108 108" className={`absolute ${className}`} role="img" aria-label="公司印章">
      <defs>
        <linearGradient id="ink" x1="0.6" y1="0" x2="0.4" y2="1">
          <stop offset="0" stopColor="#fb2532" />
          <stop offset="1" stopColor="#fd7480" />
        </linearGradient>
      </defs>
      <circle cx="54" cy="54" r="52" fill="none" stroke="url(#ink)" strokeWidth="3" />
      <polygon points={star} fill="#f8303f" />
      {[..."辽宁迪纳技术有限公司"].map((c, i) => (
        <text
          key={c}
          x="54"
          y="21"
          fontSize="15"
          fontWeight="500"
          textAnchor="middle"
          fill="#f8303f"
          fontFamily="Noto Sans CJK SC, sans-serif"
          transform={`rotate(${-111 + i * 30} 54 54)`}
        >
          {c}
        </text>
      ))}
      <path d="M73 38l1 1M73 47l2-2 1 3M72 50h3" stroke="#fd8d96" />
    </svg>
  );
}

/* ---------- pages ---------- */

function Return({ className = "" }) {
  return (
    <Svg w={6} h={6} className={`inline-block ${className}`}><path d="M5.500 0v3.500H.5M2.500 1.500l-2 2 2 2" stroke="#999" /></Svg>
  );
}

function PageFoot({ number }) {
  return (
    <div className="mt-auto mb-[49px] flex items-start justify-between px-[49px]">
      <span className="h-4 w-4 border-t border-r border-[#aaa]" />
      <span className="pt-1.5 pl-1 font-serif text-[8px] leading-[10px] text-[#444]">{number}<Return /></span>
      <span className="h-4 w-4 border-t border-l border-[#aaa]" />
    </div>
  );
}

function NextPage({ children }) {
  return (
    <div className="h-[786px] border border-[#c6c6c6] bg-white px-[49px] pt-[39px]">
      <p className="pl-6 text-center text-[10px] leading-3 text-[#777]">辽宁迪纳技术有限公司<Return /></p>
      <div className="flex h-[15px]">
        <span className="w-4 border-r border-b border-[#aaa]" />
        <span className="mt-[2px] flex-1 border-t border-[#777]" />
        <span className="w-4 border-b border-l border-[#aaa]" />
      </div>
      <h3 className="mt-px pl-4 font-['Liberation_Mono','Noto_Sans_CJK_SC',monospace] text-xs leading-[14px] font-bold text-black">{children}</h3>
    </div>
  );
}

function Document() {
  return (
    <main className="flex min-w-0 flex-1 flex-col items-center overflow-hidden pr-[15px]">
      <div className="relative z-10 flex h-[30px] w-[1118px] shrink-0 items-center pb-[4px]"><HorizontalRuler /></div>
      <div className="grid w-[1118px] shrink-0 grid-cols-2 gap-x-3 gap-y-2.5">
        <div className="relative flex h-[718px] flex-col border-x border-b border-[#c6c6c6] bg-white">
          <h3 className="flex h-[18px] items-center pl-[59px] text-[13px] leading-[18px] font-bold text-black">
            <span className="mt-2 mr-[2px] h-1 w-1 bg-black" />
            <span className="mr-[6px] font-['Liberation_Mono',monospace] text-[11px]">3.3.2</span>
            发票
            <Return />
          </h3>
          <Invoice data={invoices[0]} className="mt-[10px] ml-[76px] w-[387px]" bodyHeight="h-[208px]" bar="h-[3px] w-[78px] bg-[#cfa48f]" />
          <div className="flex h-3 justify-end pr-[58px]"><Return className="-mt-1" /></div>
          <p className="pl-[72px] text-[6px] leading-[16px] font-bold text-[#222]">发票详情</p>
          <Invoice data={invoices[1]} className="mt-[4px] ml-[72px] w-[407px]" bodyHeight="h-[220px]" bar="h-1 w-[78px] border-y border-[#b5714f]" />
          <div className="-mt-[3px] mr-[63px] ml-[65px] flex h-px bg-[#9fb0ad]" />
          <PageFoot number="51" />
          <div className="absolute top-[342px] left-[52px] h-[65px] w-[236px] border-4 border-[#d01121]" />
          <Stamp className="top-[535px] left-[359px]" />
        </div>
        <div className="relative flex h-[718px] flex-col border-x border-b border-[#c6c6c6] bg-white">
          <p className="flex w-[484px] items-center justify-between pl-[72px] text-[6px] leading-3 font-bold text-[#222]">
            发票详情
            <span className="font-normal text-[#777]">×</span>
          </p>
          <Invoice data={invoices[2]} className="mt-1 ml-[72px] w-[400px]" bodyHeight="h-[216px]" bar="h-[3px] w-[76px] bg-[#cfa48f]" />
          <div className="flex h-2 justify-end pr-[58px]"><Return className="-mt-2" /></div>
          <div className="-mt-1.5 pl-[65px] leading-[16px]"><Return /></div>
          <div className="pt-[10px] pl-[200px] leading-[16px]"><Return /></div>
          <PageFoot number="52" />
          <div className="absolute top-[44px] left-[54px] h-[74px] w-[261px] border-4 border-[#d01121]" />
          <Stamp className="top-[374px] left-[324px]" />
        </div>
        <NextPage>3.4 . 业绩 3-LHYT-LJGS-2023-CL-7648</NextPage>
        <NextPage>3.4.1 合同</NextPage>
      </div>
    </main>
  );
}

/* ---------- status bar ---------- */

function StatusBar() {
  return (
    <footer className="flex h-[22px] shrink-0 items-center border-t border-[#c6c6c6] bg-[#f3f3f3] pr-[14px] pl-3 text-xs whitespace-nowrap text-[#444]">
      <button className="mr-[23px]">第 51 页，共 203 页</button>
      <button className="mr-[19px]">10892 个字</button>
      <button aria-label="校对" className="mr-[18px]">
        <Svg w={15} h={13}>
          <path d="M7 12V2C5 .5 3 .5.500.5v10c3 0 5 0 6.500 1.500 1-1 2-1.500 3-1.500M7 2c1-1 2-1.500 3.500-1.500" stroke="#666" />
          <path d="M10 3.500l4 5M14 3.500l-4 5" stroke="#666" strokeWidth="1.500" />
        </Svg>
      </button>
      <button className="mr-[19px]">简体中文(中国大陆)</button>
      <button className="mr-[19px] font-medium">修订: 关闭</button>
      <button className="flex items-center gap-1 font-medium">
        <Svg w={15} h={15}>
          <path d="M3 2a6 6 0 0 0-1 8M5.500 5l2 1.500v3L5 13M7.500 6.500L12 5M7.500 9.500L13 14M10 14l4-5" stroke="#444" strokeWidth="1.300" />
          <circle cx="8" cy="2.500" r="1.500" fill="#444" />
        </Svg>
        辅助功能: 调查
      </button>
      <div className="ml-auto flex h-full items-center">
        <button aria-label="阅读视图" className="flex h-full w-10 items-center justify-center">
          <Svg w={14} h={14}>
            <path d="M7 13V2.500L5.500 1H.5v11h5zM7 2.500L8.500 1h5v11h-5L7 13M2 3.500h3M2 5.500h3M2 7.500h3M2 9.500h3M9 3.500h3M9 5.500h3M9 7.500h3M9 9.500h3" stroke="#666" />
          </Svg>
        </button>
        <button aria-label="页面视图" className="flex h-full w-10 items-center justify-center bg-[#c6c6c6]">
          <Svg w={14} h={14}><path d="M.5.5h13v13H.5zM2.500 3h9M2.500 5h9M2.500 7h9M2.500 9h9M2.500 11h9" stroke="#555" /></Svg>
        </button>
        <button aria-label="Web 版式视图" className="flex h-full w-10 items-center justify-center">
          <Svg w={14} h={14}>
            <path d="M6 11.500H.5V.5h11v4M2.500 3h7M2.500 5h6M2.500 7h3M2.500 9h3" stroke="#666" />
            <circle cx="10" cy="9.500" r="3.500" fill="#666" />
            <path d="M9 8l3 1-1.500 2" stroke="#f3f3f3" />
          </Svg>
        </button>
        <button aria-label="缩小" className="ml-[6px]"><Svg w={8} h={9}><path d="M0 4.500h8" stroke="#333" /></Svg></button>
        <label className="relative mx-[5px] flex w-[100px] items-center">
          <span className="sr-only">显示比例</span>
          <span className="absolute left-1/2 h-2 w-px bg-[#444]" />
          <input
            type="range"
            defaultValue={33}
            className="h-px w-full appearance-none bg-[#333] [&::-webkit-slider-thumb]:h-[11px] [&::-webkit-slider-thumb]:w-[5px] [&::-webkit-slider-thumb]:appearance-none [&::-webkit-slider-thumb]:bg-[#444]"
          />
        </label>
        <button aria-label="放大"><Svg w={9} h={9}><path d="M0 4.500h9M4.500 0v9" stroke="#333" /></Svg></button>
        <button className="ml-3">70%</button>
      </div>
    </footer>
  );
}

export default function App() {
  return (
    <div className="flex h-screen flex-col overflow-hidden font-['Open_Sans','Noto_Sans_CJK_SC',sans-serif]">
      <div className="flex min-h-0 flex-1">
        <div className="w-1.5 shrink-0 bg-linear-to-b from-[#084488] via-[#1d78b4] via-35% to-[#14647f]" />
        <div className="flex min-w-0 flex-1 flex-col bg-[#e6e6e6]">
          <TitleBar />
          <TabRow />
          <Ribbon />
          <LicenseBar />
          <div className="flex min-h-0 flex-1">
            <NavigationPane />
            <VerticalRuler />
            <Document />
          </div>
          <StatusBar />
        </div>
      </div>
      <div className="flex h-1.5 shrink-0 bg-linear-to-r from-[#1f3a40] to-[#18264a]">
        <span className="ml-[36%] w-12 bg-[#a5672f]" />
        <span className="ml-[148px] w-12 bg-[#4a5d66]" />
      </div>
    </div>
  );
}
